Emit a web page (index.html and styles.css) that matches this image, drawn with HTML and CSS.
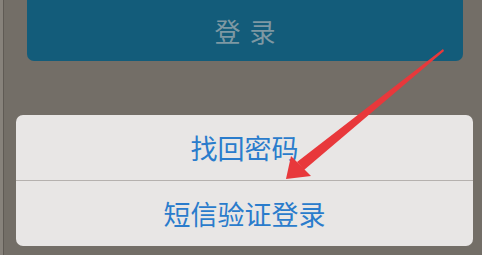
FILE: index.html
```html
<!DOCTYPE html>
<html lang="zh">
<head>
<meta charset="UTF-8" />
<meta name="viewport" content="width=device-width, initial-scale=1" />
<title>登录</title>
<link rel="stylesheet" href="styles.css">
</head>
<body>

<div class="edge"></div>

<div class="screen">
  <div class="login-btn">登录</div>

  <div class="action-sheet">
    <div class="sheet-item">找回密码</div>
    <div class="sheet-item">短信验证登录</div>
  </div>
</div>

<!-- 红色箭头标注 -->
<svg class="arrow" width="482" height="255" viewBox="0 0 482 255">
  <polygon points="443,49 444,51 304,170 297,162" fill="#e8383b" />
  <polygon points="286,179 291,156 311,176" fill="#e8383b" />
</svg>

</body>
</html>
```

FILE: styles.css
```css
* {
  box-sizing: border-box;
}
body {
  margin: 0;
  width: 482px;
  height: 255px;
  overflow: hidden;
  display: flex;
  background: #736e67;
  font-family: "Noto Sans CJK SC", "Noto Sans", sans-serif;
  position: relative;
}
/* 左侧边缘 */
.edge {
  width: 4px;
  flex-shrink: 0;
  background: #87827b;
  border-right: 1px solid #5f5a54;
}
.screen {
  flex-grow: 1;
  display: flex;
  flex-direction: column;
}
/* 登录按钮 */
.login-btn {
  margin: -10px 19px 0 23px;
  height: 71px;
  padding-top: 10px;
  background: #135c7a;
  border-radius: 7px;
  color: #7e98a3;
  font-size: 26px;
  letter-spacing: 9px;
  text-indent: 9px;
  display: flex;
  justify-content: center;
  align-items: center;
}
/* 底部弹出菜单 */
.action-sheet {
  margin: 54px 9px 0 12px;
  height: 131px;
  background: #e8e6e5;
  border-radius: 7px;
  display: flex;
  flex-direction: column;
}
.sheet-item {
  flex: 1;
  display: flex;
  justify-content: center;
  align-items: center;
  color: #2a7ccc;
  font-size: 27px;
}
.sheet-item + .sheet-item {
  border-top: 1px solid #b5b1ae;
}
.arrow {
  position: absolute;
  left: 0;
  top: 0;
}
```
